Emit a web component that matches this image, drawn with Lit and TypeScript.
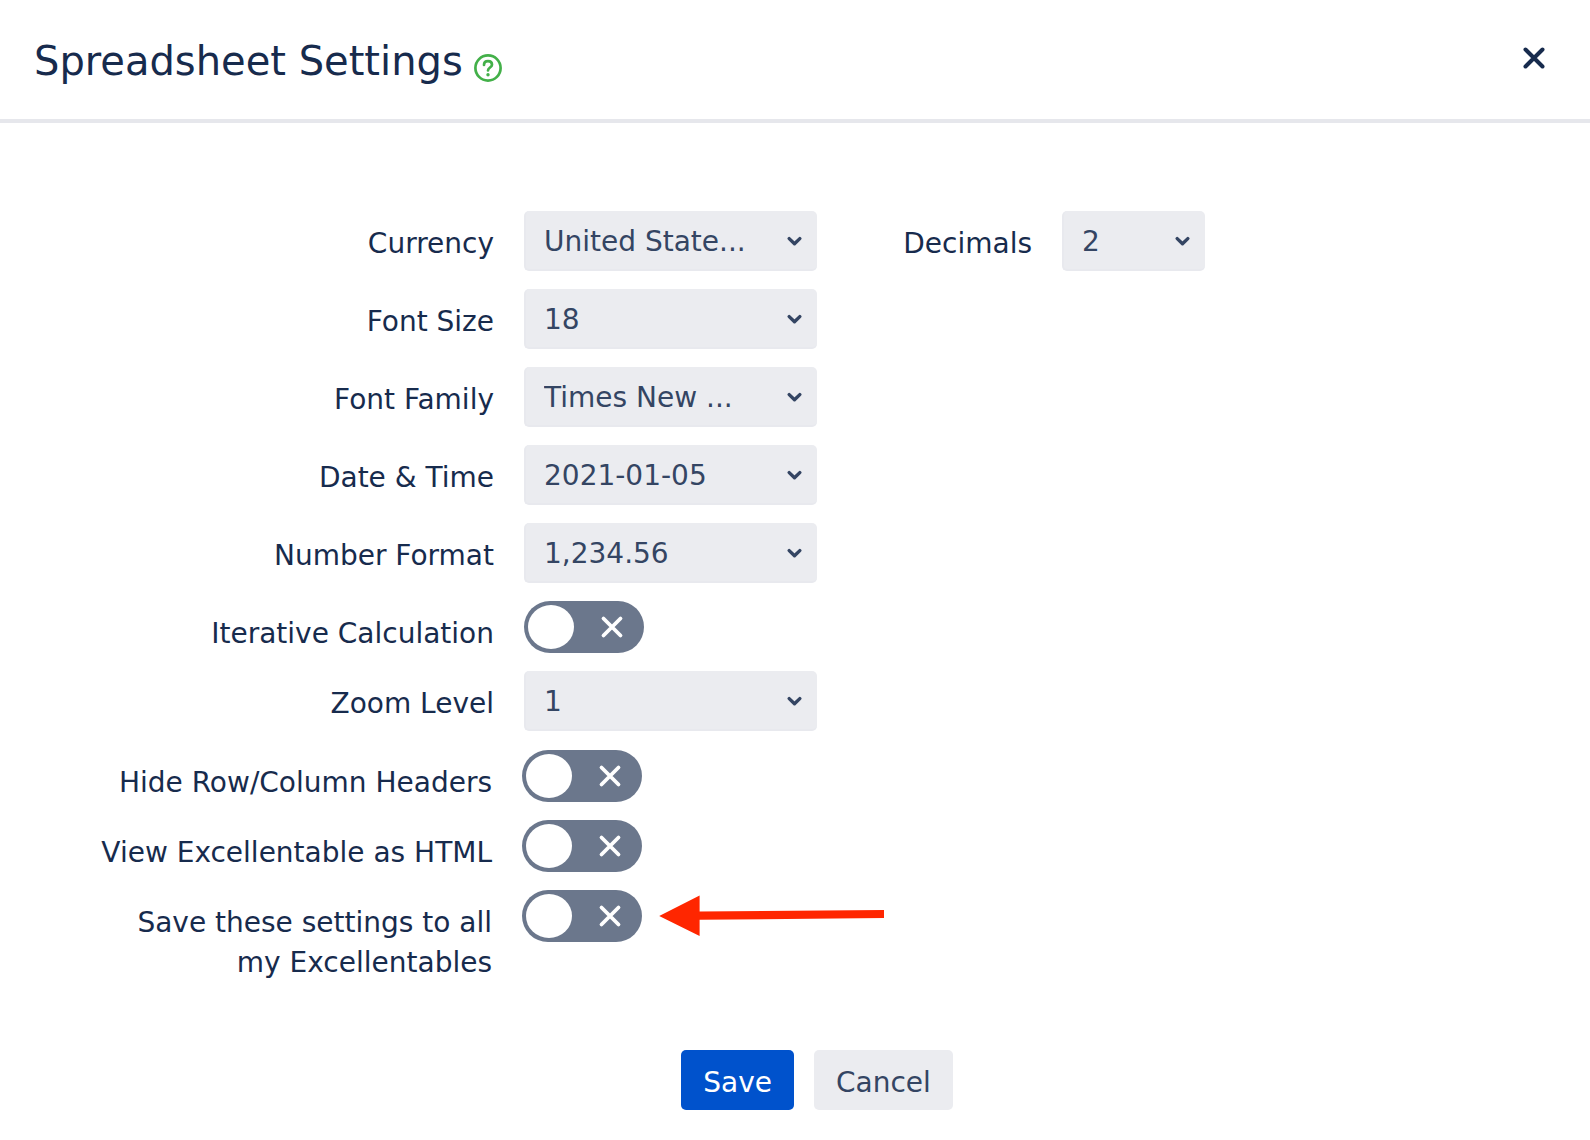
import { LitElement, html, css, nothing } from "lit";
import { customElement, property } from "lit/decorators.js";

const FONT = css`Verdana, "DejaVu Sans", sans-serif`;

@customElement("settings-select")
class SettingsSelect extends LitElement {
  @property() label = "";
  @property({ type: Array }) options: string[] = [];

  static styles = css`
    :host {
      display: contents;
    }
    .label {
      padding-top: 13px;
      text-align: right;
    }
    .field {
      display: grid;
      align-items: center;
      align-self: start;
    }
    .select,
    .chevron {
      grid-area: 1 / 1;
    }
    .select {
      appearance: none;
      width: 100%;
      height: 60px;
      margin: 0;
      padding: 3px 44px 0 18px;
      border: 2px solid #e8e9ee;
      border-width: 0 0 2px 2px;
      border-radius: 5px;
      background: #ebecf0;
      color: #344563;
      font: 28px ${FONT};
    }
    .chevron {
      justify-self: end;
      width: 16px;
      height: 12px;
      margin-right: 15px;
      pointer-events: none;
    }
  `;

  render() {
    return html`
      <label class="label" for="select">${this.label}</label>
      <div class="field">
        <select class="select" id="select">
          ${this.options.map((o) => html`<option>${o}</option>`)}
        </select>
        <svg class="chevron" viewBox="0 0 16 12" aria-hidden="true">
          <path d="M3.2 3.6 L8.5 8.7 L13.8 3.6" fill="none" stroke="#344563" stroke-width="3.4"
            stroke-linecap="round" stroke-linejoin="round" />
        </svg>
      </div>
    `;
  }
}

@customElement("settings-toggle")
class SettingsToggle extends LitElement {
  @property() label = "";
  @property({ type: Boolean }) highlighted = false;

  static styles = css`
    :host {
      display: contents;
    }
    .label {
      margin-bottom: -1px;
      padding-top: 13px;
      text-align: right;
    }
    .field {
      position: relative;
      display: grid;
      grid-template-columns: 120px;
      align-content: start;
    }
    .switch,
    .face {
      grid-area: 1 / 1;
      width: 120px;
      height: 52px;
    }
    .switch {
      appearance: none;
      margin: 0;
      border-radius: 26px;
      background: #6b778c;
      cursor: pointer;
    }
    .face {
      pointer-events: none;
    }
    .arrow {
      position: absolute;
      top: 4px;
      left: 136px;
      width: 228px;
      height: 44px;
    }
  `;

  render() {
    return html`
      <label class="label" for="switch">${this.label}</label>
      <div class="field">
        <input class="switch" id="switch" type="checkbox" role="switch" />
        <svg class="face" viewBox="0 0 120 52" aria-hidden="true">
          <ellipse cx="27" cy="26" rx="23" ry="22" fill="#fff" />
          <path d="M79.5 17.5 L96.5 34.5 M96.5 17.5 L79.5 34.5" stroke="#fff" stroke-width="3.8" stroke-linecap="round" />
        </svg>
        ${this.highlighted
          ? html`<svg class="arrow" viewBox="0 0 228 44" aria-hidden="true">
              <path d="M1.2 22 L41.6 1.4 V17.5 L226 16 V24 L41.6 25.8 V42 Z" fill="#ff2600" />
            </svg>`
          : nothing}
      </div>
    `;
  }
}

@customElement("app-root")
class AppRoot extends LitElement {
  static styles = css`
    :host {
      display: block;
      min-height: 100vh;
      background: #fff;
      color: #172b4d;
      font: 28px/40px ${FONT};
    }
    .header {
      display: flex;
      align-items: center;
      justify-content: space-between;
      padding: 33px 40px 30px 34px;
      border-bottom: 4px solid #e6e7ec;
    }
    .heading {
      display: flex;
      align-items: center;
      gap: 10px;
    }
    .title {
      margin: 0;
      font-size: 40px;
      font-weight: 400;
      line-height: 56px;
    }
    .help {
      display: flex;
      padding-top: 14px;
    }
    .close {
      display: flex;
      margin: 0 0 6px;
      padding: 0;
      border: 0;
      background: none;
      cursor: pointer;
    }
    .form {
      display: grid;
      gap: 18px;
      padding-top: 88px;
    }
    .rows {
      display: grid;
      grid-template-columns: minmax(0, 494px) 293px 185px 143px;
      gap: 18px 30px;
    }
    .options {
      display: grid;
      grid-template-columns: minmax(0, 402px) 293px;
      gap: 18px 30px;
      padding: 1px 0 0 90px;
    }
    .spacer {
      grid-column: 3 / 5;
    }
    .footer {
      display: flex;
      justify-content: center;
      gap: 20px;
      padding: 68px 0 30px 44px;
    }
    .button {
      height: 60px;
      padding: 4px 22px 0;
      border: 0;
      border-radius: 5px;
      background: #ebecf0;
      color: #344563;
      font: 28px ${FONT};
      cursor: pointer;
    }
    .primary {
      background: #0052cc;
      color: #fff;
    }
  `;

  render() {
    return html`
      <header class="header">
        <div class="heading">
          <h1 class="title">Spreadsheet Settings</h1>
          <a class="help" href="#help" aria-label="Help">
            <svg width="30" height="30" viewBox="0 0 30 30" fill="none" stroke="#43b049">
              <circle cx="15" cy="15" r="12.6" stroke-width="2.7" />
              <path d="M11 12 C11 9.5 12.6 8.2 15 8.2 C17.4 8.2 19 9.5 19 11.7 C19 14.4 15 14.6 15 17.4"
                stroke-width="2.7" stroke-linecap="round" />
              <circle cx="15" cy="21.8" r="1.7" fill="#43b049" stroke="none" />
            </svg>
          </a>
        </div>
        <button class="close" type="button" aria-label="Close">
          <svg width="32" height="32" viewBox="0 0 32 32">
            <path d="M7.5 7.5 L24.5 24.5 M24.5 7.5 L7.5 24.5" stroke="#172b4d" stroke-width="4" stroke-linecap="round" />
          </svg>
        </button>
      </header>
      <main class="form">
        <div class="rows">
          <settings-select label="Currency" .options=${["United State..."]}></settings-select>
          <settings-select label="Decimals" .options=${["2"]}></settings-select>
          <settings-select label="Font Size" .options=${["18"]}></settings-select>
          <span class="spacer"></span>
          <settings-select label="Font Family" .options=${["Times New ..."]}></settings-select>
          <span class="spacer"></span>
          <settings-select label="Date &amp; Time" .options=${["2021-01-05"]}></settings-select>
          <span class="spacer"></span>
          <settings-select label="Number Format" .options=${["1,234.56"]}></settings-select>
          <span class="spacer"></span>
          <settings-toggle label="Iterative Calculation"></settings-toggle>
          <span class="spacer"></span>
          <settings-select label="Zoom Level" .options=${["1"]}></settings-select>
        </div>
        <div class="options">
          <settings-toggle label="Hide Row/Column Headers"></settings-toggle>
          <settings-toggle label="View Excellentable as HTML"></settings-toggle>
          <settings-toggle label="Save these settings to all my Excellentables" highlighted></settings-toggle>
        </div>
      </main>
      <footer class="footer">
        <button class="button primary" type="button">Save</button>
        <button class="button" type="button">Cancel</button>
      </footer>
    `;
  }
}
